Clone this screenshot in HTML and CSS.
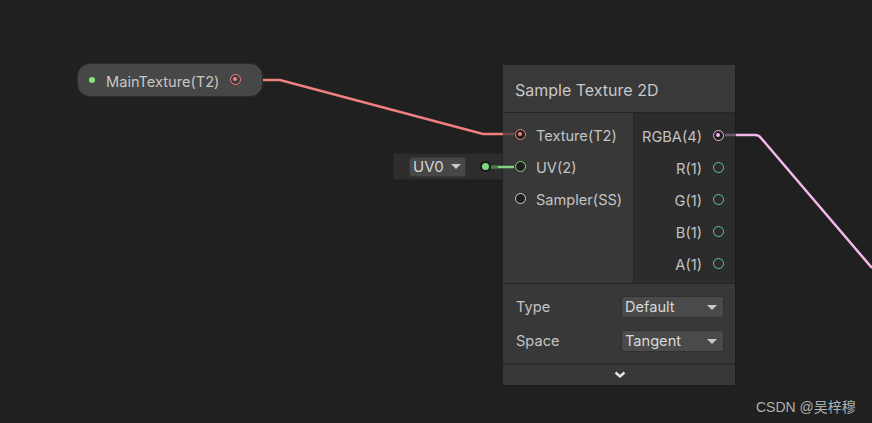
FILE: index.html
```html
<!DOCTYPE html>
<html lang="en">

<head>
    <meta charset="UTF-8">
    <meta name="viewport" content="width=device-width, initial-scale=1.0">
    <title>Shader Graph</title>
    <link rel="stylesheet" href="styles.css">
</head>

<body>
    <div class="canvas">
        <!-- property node -->
        <div class="prop-node">
            <span class="dot-green"></span>
            <span class="prop-name">MainTexture(T2)</span>
            <span class="port port-tex connected"></span>
        </div>

        <!-- uv inline input -->
        <div class="uv-box">
            <div class="mini-select">UV0 <span class="tri"></span></div>
            <span class="uv-dot"></span>
        </div>

        <!-- sample node -->
        <div class="node">
            <div class="node-title">Sample Texture 2D</div>
            <div class="node-ports">
                <div class="inputs">
                    <div class="row"><span class="port port-tex connected"></span><span>Texture(T2)</span></div>
                    <div class="row"><span class="port port-uv"></span><span>UV(2)</span></div>
                    <div class="row"><span class="port port-ss"></span><span>Sampler(SS)</span></div>
                </div>
                <div class="outputs">
                    <div class="row"><span>RGBA(4)</span><span class="port port-rgba connected"></span></div>
                    <div class="row"><span>R(1)</span><span class="port port-f"></span></div>
                    <div class="row"><span>G(1)</span><span class="port port-f"></span></div>
                    <div class="row"><span>B(1)</span><span class="port port-f"></span></div>
                    <div class="row"><span>A(1)</span><span class="port port-f"></span></div>
                </div>
            </div>
            <div class="node-settings">
                <div class="field">
                    <span class="field-label">Type</span>
                    <div class="select">Default <span class="tri"></span></div>
                </div>
                <div class="field">
                    <span class="field-label">Space</span>
                    <div class="select">Tangent <span class="tri"></span></div>
                </div>
            </div>
            <div class="node-foot">
                <svg width="12" height="8" viewBox="0 0 12 8">
                    <path d="M1.5 1.5 L6 5.5 L10.5 1.5" stroke="#e6e6e6" stroke-width="2.4" fill="none" />
                </svg>
            </div>
        </div>

        <!-- edges, drawn over the node borders -->
        <svg class="wires" width="872" height="423" viewBox="0 0 872 423">
            <path d="M263 80 L280 80 L483 134 L503 134" stroke="#f07f7f" stroke-width="2.5" fill="none" />
            <path d="M503 134 L514 134" stroke="#6e4a4a" stroke-width="2.5" fill="none" />
            <path d="M489 167 L514 167" stroke="#80d680" stroke-width="2.5" fill="none" />
            <path d="M489 167 L498 167" stroke="#4f7a4f" stroke-width="2.5" fill="none" />
            <path d="M725 135 L736 135" stroke="#6e5a6c" stroke-width="2.5" fill="none" />
            <path d="M736 135 L755 135 Q759 135 761 138 L872 268" stroke="#f3b7ec" stroke-width="2.5" fill="none" />
        </svg>

        <div class="watermark">CSDN @吴梓穆</div>
    </div>
</body>

</html>
```

FILE: styles.css
```css
* {
    margin: 0;
    padding: 0;
    box-sizing: border-box;
}

body {
    background-color: #202020;
    font-family: Inter, "Noto Sans", "Noto Sans CJK SC", sans-serif;
    color: #c4c4c4;
    font-size: 14.6px;
}

.canvas {
    width: 872px;
    height: 423px;
    position: relative;
    overflow: hidden;
}

.wires {
    position: absolute;
    left: 0;
    top: 0;
    pointer-events: none;
}

/* ports */
.port {
    display: inline-block;
    width: 11px;
    height: 11px;
    border-radius: 50%;
    border: 1.5px solid #c8c8c8;
    background-color: #1f1f1f;
    position: relative;
    flex-shrink: 0;
}

.port.connected::after {
    content: "";
    position: absolute;
    left: 2px;
    top: 2px;
    width: 4px;
    height: 4px;
    border-radius: 50%;
}

.port-tex {
    border-color: #f08383;
}

.port-tex.connected::after {
    background-color: #f08383;
}

.port-uv {
    border-color: #84d984;
}

.port-ss {
    border-color: #cfcfcf;
}

.port-rgba {
    border-color: #efb6e8;
}

.port-rgba.connected::after {
    background-color: #efb6e8;
}

.port-f {
    border-color: #5ec4c4;
    background-color: transparent;
}

/* property node */
.prop-node {
    position: absolute;
    left: 77px;
    top: 63px;
    width: 186px;
    height: 34px;
    border-radius: 13px;
    background-color: #474747;
    border: 1px solid #2c2c2c;
    display: flex;
    align-items: center;
    padding-left: 11px;
}

.dot-green {
    width: 6px;
    height: 6px;
    border-radius: 50%;
    background-color: #8ee07a;
}

.prop-name {
    margin-left: 11px;
    margin-right: 11px;
    margin-top: 3px;
    color: #c6c6c6;
}

.prop-node .port {
    background-color: #3a3a3a;
    margin-top: -1px;
}

/* uv box */
.uv-box {
    position: absolute;
    left: 393px;
    top: 153px;
    width: 110px;
    height: 27px;
    background-color: #2d2d2d;
    border: 1px solid #242424;
    display: flex;
    align-items: center;
    padding-left: 15px;
}

.mini-select {
    width: 57px;
    height: 20px;
    background-color: #474747;
    border-radius: 3px;
    border: 1px solid #383838;
    display: flex;
    align-items: center;
    padding-left: 3px;
    color: #d6d6d6;
    font-size: 15px;
    gap: 7px;
}

.uv-dot {
    width: 7px;
    height: 7px;
    border-radius: 50%;
    background-color: #7fd97f;
    border: 2px solid #1a1a1a;
    margin-left: 14px;
    box-sizing: content-box;
    position: relative;
    z-index: 2;
}

.tri {
    width: 0;
    height: 0;
    border-left: 5px solid transparent;
    border-right: 5px solid transparent;
    border-top: 5px solid #c8c8c8;
}

/* main node */
.node {
    position: absolute;
    left: 503px;
    top: 65px;
    width: 233px;
    background-color: #383838;
    border-right: 1px solid #1b1b1b;
    border-bottom: 1px solid #1b1b1b;
}

.node-title {
    height: 48px;
    padding-left: 12px;
    padding-top: 2px;
    display: flex;
    align-items: center;
    font-size: 16px;
    color: #c8c8c8;
    background-color: #393939;
    border-bottom: 1px solid #262626;
}

.node-ports {
    display: flex;
    height: 171px;
    border-bottom: 1px solid #252525;
}

.inputs {
    width: 130px;
    padding-top: 5px;
    background-color: #383838;
}

.outputs {
    flex: 1;
    padding-top: 6px;
    background-color: #2c2c2c;
    border-left: 1px solid #262626;
}

.row {
    height: 32px;
    display: flex;
    align-items: center;
    color: #c4c4c4;
}

.row span:not(.port) {
    margin-top: 3px;
}

.inputs .row {
    padding-left: 12px;
    gap: 10px;
}

.outputs .row {
    justify-content: flex-end;
    padding-right: 11px;
    gap: 11px;
}

.node-settings {
    height: 81px;
    padding-top: 6px;
    border-bottom: 2px solid #2b2b2b;
}

.field {
    height: 34px;
    display: flex;
    align-items: center;
    padding-left: 13px;
}

.field-label {
    width: 105px;
    color: #c4c4c4;
}

.select {
    width: 103px;
    height: 22px;
    background-color: #4a4a4a;
    border: 1px solid #303030;
    border-radius: 3px;
    display: flex;
    align-items: center;
    justify-content: space-between;
    padding-left: 3px;
    padding-right: 6px;
    color: #d8d8d8;
}

.node-foot {
    height: 20px;
    display: flex;
    justify-content: center;
    align-items: center;
    padding-left: 2px;
}

.watermark {
    position: absolute;
    left: 756px;
    top: 396px;
    font-family: "Liberation Sans", "Noto Sans CJK SC", sans-serif;
    font-size: 14px;
    color: #b0b0b0;
}
```
